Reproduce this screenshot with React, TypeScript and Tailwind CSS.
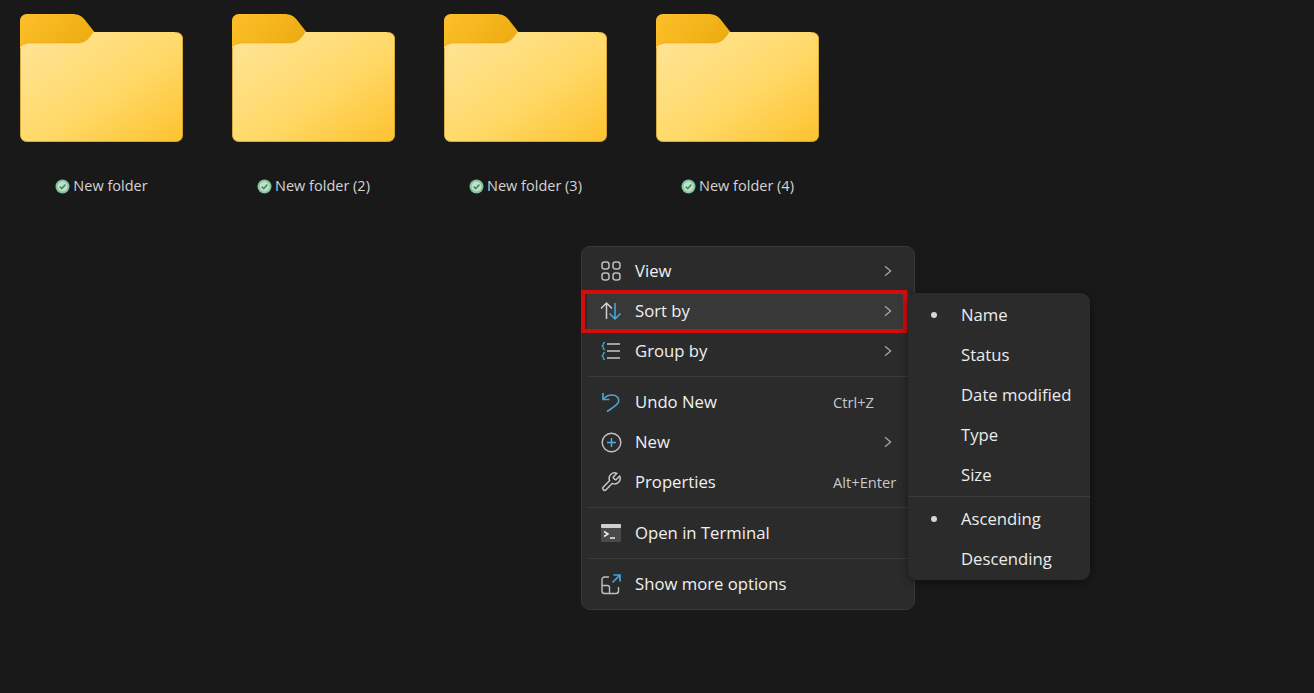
import React from "react";

function Folder({ id }: { id: string }) {
  return (
    <svg width="163" height="128" viewBox="0 0 163 128" className="block">
      <defs>
        <linearGradient id={id + "b"} x1="0" y1="0" x2="1" y2="0.35">
          <stop offset="0" stopColor="#fcc02a" />
          <stop offset="1" stopColor="#eda90f" />
        </linearGradient>
        <linearGradient id={id + "f"} x1="0" y1="0" x2="1" y2="1">
          <stop offset="0" stopColor="#ffe59a" />
          <stop offset="0.55" stopColor="#ffd968" />
          <stop offset="1" stopColor="#fdc22e" />
        </linearGradient>
      </defs>
      <path d="M7 0H52C58 0 62 2 65 6L76 20H90V40H0V7C0 3 3 0 7 0Z" fill={`url(#${id}b)`} />
      <path d="M73 18H155C160 18 163 21 163 25V120C163 125 160 128 155 128H8C3 128 0 125 0 120V34C0 32 3 30 9 29H57C63 29 68 27 73 18Z" fill={`url(#${id}f)`} />
      <path d="M0.5 34V120C0.5 125 3 127.5 8 127.5H155C160 127.5 162.5 125 162.5 120V25C162.5 21 160 18.5 155 18.5" fill="none" stroke="#c9962c" strokeWidth="1" opacity="0.7" />
      <path d="M0 34C0 32 3 30 9 29H57C63 29 68 27 73 18" fill="none" stroke="#e5a81c" strokeWidth="1" opacity="0.55" />
    </svg>
  );
}

function FolderItem({ name, id }: { name: string; id: string }) {
  return (
    <div className="w-[163px] flex flex-col items-center">
      <Folder id={id} />
      <div className="mt-[34px] h-[20px] flex items-center gap-[3px] text-[14.5px] text-[#d4d4d4]">
        <svg width="15" height="15" viewBox="0 0 15 15" className="shrink-0">
          <circle cx="7.5" cy="7.5" r="7" fill="#7fc79a" />
          <circle cx="7.5" cy="7.5" r="5" fill="#c4dfcd" />
          <path d="M4.7 7.7L6.7 9.6L10.4 5.6" fill="none" stroke="#3f8f5e" strokeWidth="1.6" />
        </svg>
        <span>{name}</span>
      </div>
    </div>
  );
}

const Chevron = () => (
  <svg width="10" height="12" viewBox="0 0 10 12" className="block">
    <path d="M2 1.2L7.6 6L2 10.8" fill="none" stroke="#a6a6a6" strokeWidth="1.3" />
  </svg>
);

const IconView = () => (
  <svg width="20" height="20" viewBox="0 0 20 20" fill="none" stroke="#bdbdbd" strokeWidth="1.5">
    <rect x="1" y="1" width="7" height="7" rx="2.4" />
    <rect x="12" y="1" width="7" height="7" rx="2.4" />
    <rect x="1" y="12" width="7" height="7" rx="2.4" />
    <rect x="12" y="12" width="7" height="7" rx="2.4" />
  </svg>
);
const IconSort = () => (
  <svg width="22" height="20" viewBox="0 0 22 20" fill="none" strokeWidth="1.5">
    <path d="M6.5 18V2M1 7.5L6.5 2L12 7.5" stroke="#d0d0d0" />
    <path d="M15 2V18M9.5 12.5L15 18L20.5 12.5" stroke="#4aa8e0" />
  </svg>
);
const IconGroup = () => (
  <svg width="20" height="20" viewBox="0 0 20 20" fill="none" strokeWidth="1.5">
    <path d="M4 1.5C2.5 1.5 2.2 2.5 2.2 3.5V4.2L1 5L2.2 5.8V6.5C2.2 7.5 2.5 8.5 4 8.5M4 11.5C2.5 11.5 2.2 12.5 2.2 13.5V14.2L1 15L2.2 15.8V16.5C2.2 17.5 2.5 18.5 4 18.5" stroke="#3f9fcf" strokeWidth="1.3" />
    <path d="M6 3H19M6 10H19M6 17H19" stroke="#c8c8c8" />
  </svg>
);
const IconUndo = () => (
  <svg width="22" height="22" viewBox="0 0 22 22" fill="none" strokeWidth="1.7" stroke="#4aa3d8">
    <path d="M3 2V8.5H9.5" />
    <path d="M3.5 8C6 5 9 3.8 12.5 4C17 4.3 19.5 7.5 18.5 11C17.5 14 13 16.5 7 20.5" />
  </svg>
);
const IconNew = () => (
  <svg width="21" height="21" viewBox="0 0 21 21" fill="none">
    <circle cx="10.5" cy="10.5" r="9.3" stroke="#c5c5c5" strokeWidth="1.4" />
    <path d="M10.5 6V15M6 10.5H15" stroke="#4fb0e6" strokeWidth="1.5" />
  </svg>
);
const IconProps = () => (
  <svg width="22" height="22" viewBox="0 0 24 24" fill="none" stroke="#c8c8c8" strokeWidth="1.6" strokeLinejoin="round">
    <path d="M14.7 6.3a1 1 0 0 0 0 1.4l1.6 1.6a1 1 0 0 0 1.4 0l3.77-3.77a6 6 0 0 1-7.94 7.94l-6.91 6.91a2.12 2.12 0 0 1-3-3l6.91-6.91a6 6 0 0 1 7.94-7.94l-3.76 3.76z" />
  </svg>
);
const IconTerminal = () => (
  <svg width="20" height="18" viewBox="0 0 20 18">
    <rect x="0" y="0" width="20" height="18" rx="1.5" fill="#4a4a4a" />
    <rect x="0" y="0" width="20" height="4" rx="1" fill="#cfcfcf" />
    <path d="M3 7.5L7 10L3 12.5" fill="none" stroke="#eeeeee" strokeWidth="1.5" />
    <path d="M9 14H14" stroke="#eeeeee" strokeWidth="1.5" />
  </svg>
);
const IconMore = () => (
  <svg width="20" height="21" viewBox="0 0 20 21" fill="none">
    <path d="M8 3H3.5C2 3 1 4 1 5.5V17C1 18.5 2 19.5 3.5 19.5H15C16.5 19.5 17.5 18.5 17.5 17V13" stroke="#c0c0c0" strokeWidth="1.4" />
    <path d="M1 11.5H6.5C7.5 11.5 8.5 12.5 8.5 13.5V19.5" stroke="#c0c0c0" strokeWidth="1.4" />
    <path d="M11.5 8.5L18.5 1.5M12.5 1H19V7.5" stroke="#3fa6dc" strokeWidth="1.7" />
  </svg>
);

function Row({ icon, label, hint, arrow, active }: { icon: React.ReactNode; label: string; hint?: string; arrow?: boolean; active?: boolean }) {
  return (
    <div className={`h-[40px] flex items-center rounded-[4px] mx-[5px] pl-[13px] pr-[16px] ${active ? "bg-[#383838]" : ""}`}>
      <div className="w-[22px] h-[22px] flex items-center justify-center shrink-0">{icon}</div>
      <span className="ml-[13px] text-[16.7px] text-[#f0f0f0]">{label}</span>
      <div className="ml-auto flex items-center">
        {hint && <span className="w-[63px] -mr-[3px] text-[14.7px] whitespace-nowrap text-[#c8c8c8]">{hint}</span>}
        {arrow && <Chevron />}
      </div>
    </div>
  );
}

function SubRow({ label, dot }: { label: string; dot?: boolean }) {
  return (
    <div className="h-[40px] flex items-center relative pl-[53px]">
      {dot && <span className="absolute left-[23px] top-[17px] w-[6px] h-[6px] rounded-full bg-[#d6d6d6]" />}
      <span className="text-[16.7px] text-[#ececec]">{label}</span>
    </div>
  );
}

export default function App() {
  return (
    <div
      className="relative w-[1314px] h-[693px] overflow-hidden bg-[#191919]"
      style={{ fontFamily: '"Open Sans", "Noto Sans", sans-serif' }}
    >
      <div className="flex gap-[49px] pl-[20px] pt-[14px]">
        <FolderItem id="a" name="New folder" />
        <FolderItem id="b" name="New folder (2)" />
        <FolderItem id="c" name="New folder (3)" />
        <FolderItem id="d" name="New folder (4)" />
      </div>

      <div className="absolute left-[581px] top-[246px] w-[334px] h-[364px] pt-[4px] rounded-[9px] bg-[#2b2b2b] border border-[#383838]">
        <Row icon={<IconView />} label="View" arrow />
        <Row icon={<IconSort />} label="Sort by" arrow active />
        <Row icon={<IconGroup />} label="Group by" arrow />
        <div className="h-px bg-[#3b3b3b] mx-[6px] my-[5px]" />
        <Row icon={<IconUndo />} label="Undo New" hint="Ctrl+Z" />
        <Row icon={<IconNew />} label="New" arrow />
        <Row icon={<IconProps />} label="Properties" hint="Alt+Enter" />
        <div className="h-px bg-[#3b3b3b] mx-[6px] my-[5px]" />
        <Row icon={<IconTerminal />} label="Open in Terminal" />
        <div className="h-px bg-[#3b3b3b] mx-[6px] my-[5px]" />
        <Row icon={<IconMore />} label="Show more options" />
      </div>

      <div className="absolute left-[581px] top-[290px] w-[326px] h-[43px] border-[4px] border-[#d30c0c]" />

      <div className="absolute left-[908px] top-[293px] w-[182px] h-[287px] pt-[2px] rounded-[9px] bg-[#2b2b2b] shadow-[0_2px_10px_rgba(0,0,0,0.45)]">
        <SubRow label="Name" dot />
        <SubRow label="Status" />
        <SubRow label="Date modified" />
        <SubRow label="Type" />
        <SubRow label="Size" />
        <div className="h-px bg-[#3b3b3b] mt-[1px] mb-[2px]" />
        <SubRow label="Ascending" dot />
        <SubRow label="Descending" />
      </div>
    </div>
  );
}
